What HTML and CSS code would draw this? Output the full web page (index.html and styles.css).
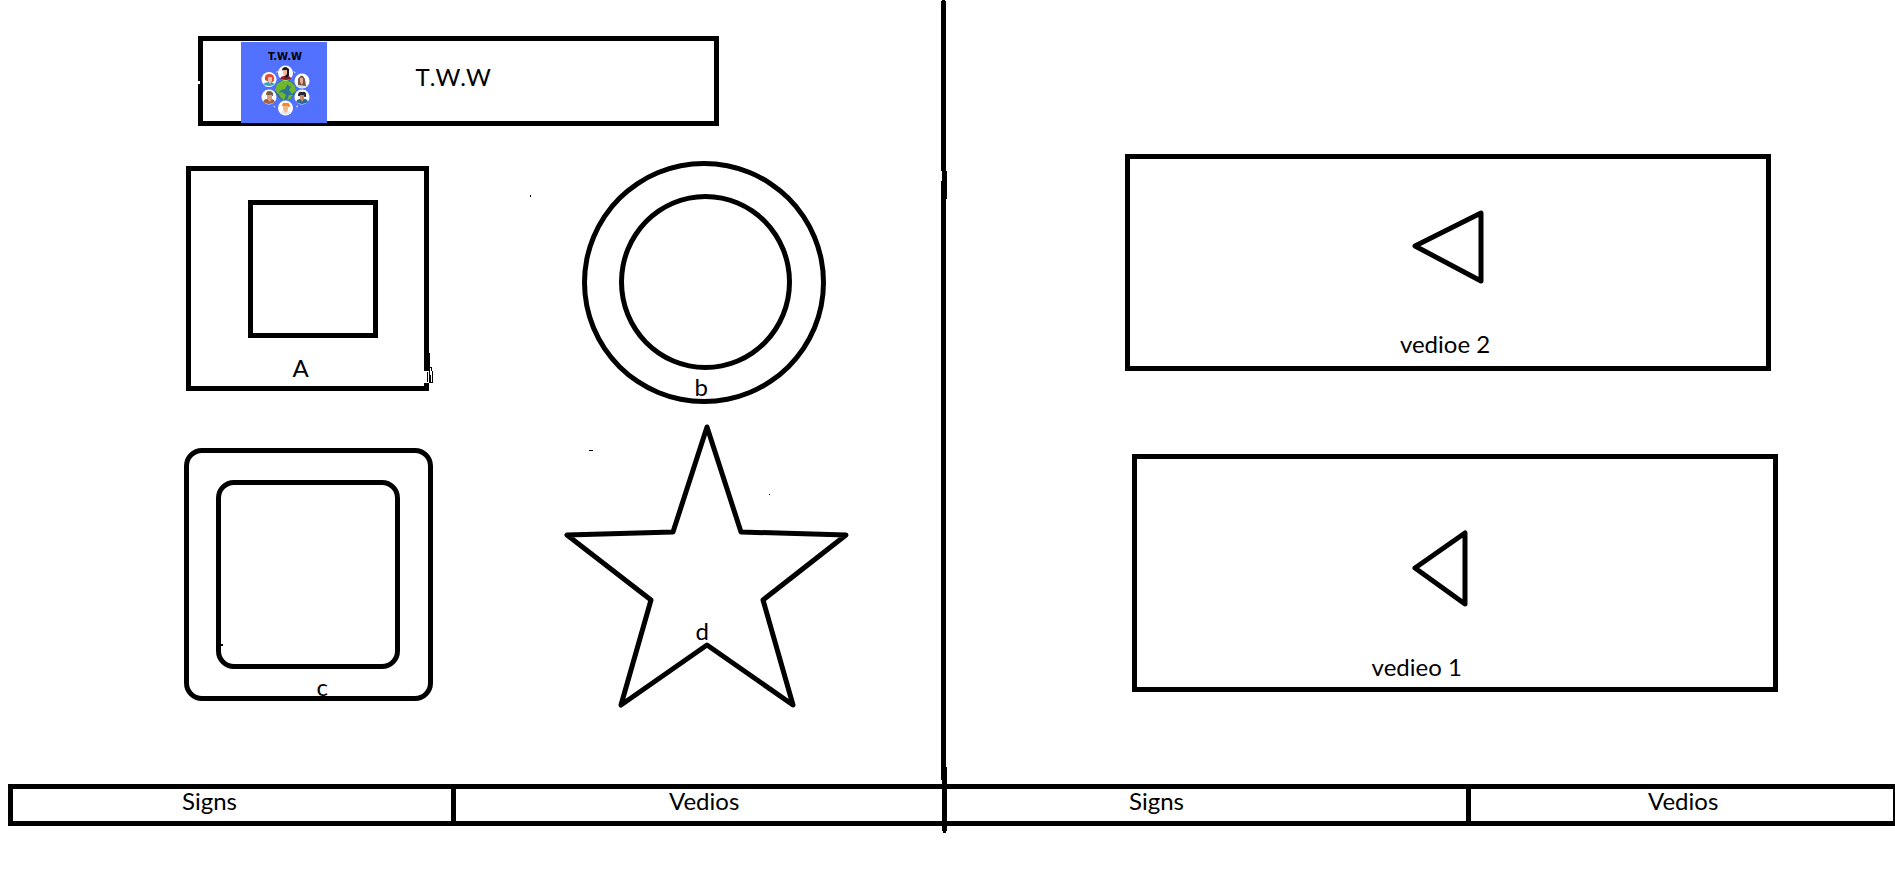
FILE: index.html
```html
<!DOCTYPE html>
<html lang="en">
<head>
<meta charset="utf-8">
<title>T.W.W</title>
<link rel="stylesheet" href="styles.css">
</head>
<body>
<div class="board">
  <div class="panes">
    <section class="pane pane-signs">
      <header class="banner">
        <svg class="logo" viewBox="0 0 86 81" role="img" aria-label="T.W.W logo">
          <rect width="86" height="81" fill="#5271ff"/>
          <text class="logo-text" x="44" y="18" text-anchor="middle">T.W.W</text>
          <circle cx="44.500" cy="48" r="20" fill="none" stroke="#fff" stroke-dasharray="2 4"/>
          <circle cx="44.500" cy="48" r="10.500" fill="#2f7396"/>
          <path d="M36 42l6-4h5l2 3-3 2-2 4-4 1-3 4-3-4zM49 39l5 5 1 5-4 3-3-4 2-3-3-2zM37 51l4-1 4 3-2 5-3-2zM48 53l4 0-3 4-3 1z" fill="#6db92d"/>
          <g fill="#fff"><circle cx="44.500" cy="31" r="7.500"/><circle cx="61" cy="39" r="7.500"/><circle cx="61" cy="55" r="7.500"/><circle cx="44.500" cy="66" r="7.500"/><circle cx="28" cy="55" r="7.500"/><circle cx="28" cy="37.500" r="7.500"/></g>
          <path d="M39 37q1-3 4-3h3q4 0 4 3-5 2-11 0z" fill="#8b1d2c"/><path d="M41 27q3-4 7 0v7l-3 2z" fill="#191622"/><path d="M42 28h4v4l-2 2-2-2z" fill="#efb99c"/>
          <path d="M55 44q6-4 12 0-6 4-12 0z" fill="#cfe3ee"/><path d="M57 43v-6q4-7 7 0l1 7z" fill="#795548"/><path d="M59 36h3v4l-1 3-2-3z" fill="#e8ae94"/>
          <path d="M55 60q2-4 6-3 5-1 6 3-6 4-12 0z" fill="#256b94"/><path d="M57 54q0-5 4-4 5-1 4 5z" fill="#262733"/><path d="M59 53h4v4l-2 3-2-3z" fill="#c98b68"/>
          <path d="M39 71q2-3 5-2 5-1 6 2-5 4-11 0z" fill="#e6edf2"/><path d="M41 64q0-4 4-3 4-1 4 4z" fill="#f18a2c"/><path d="M42 64h5v4l-2 3-3-3z" fill="#f0b78e"/>
          <path d="M22 60q2-4 6-3 4-1 6 3-6 4-12 0z" fill="#a35f48"/><path d="M25 53q0-4 3-4 5 0 4 5z" fill="#786044"/><path d="M26 53h5v4l-2 3-3-3z" fill="#d9a07e"/>
          <path d="M22 42q6-4 12 0-6 4-12 0z" fill="#35a2bd"/><path d="M24 38q-1-7 5-6 5 0 4 7l-3 2z" fill="#e24a34"/><path d="M27 35h4v4l-2 3-2-3z" fill="#f1bfa6"/>
        </svg>
        <h1 class="banner-title">T.W.W</h1>
        <span class="nick"></span>
      </header>

      <div class="shapes">
        <figure class="shape square">
          <div class="inner"></div>
          <figcaption>A</figcaption>
          <svg class="scribble" viewBox="0 0 12 30" shape-rendering="crispEdges" aria-hidden="true">
            <rect x="3" y="0" width="3" height="18"/>
            <rect x="0" y="18" width="5" height="12" fill="#fff"/>
            <path d="M3.500 19v10M5.500 17v12M6.500 22v7M8.500 18v11M7.500 14v4M6 14.500h2M5 29.500h4" fill="none" stroke="#000"/>
          </svg>
        </figure>
        <figure class="shape circle">
          <div class="inner"></div>
          <figcaption>b</figcaption>
        </figure>
        <figure class="shape rounded">
          <div class="inner"></div>
          <figcaption>c</figcaption>
          <span class="tick"></span>
        </figure>
        <figure class="star">
          <svg class="star-outline" viewBox="0 0 286 284" aria-hidden="true">
            <path d="M143 3L177 108 282 111 199 176 229 281 143 221 57 281 87 176 3 111 109 108Z"/>
          </svg>
          <figcaption>d</figcaption>
        </figure>
      </div>

      <svg class="specks" aria-hidden="true">
        <rect x="56.300%" y="195" width="1" height="2"/>
        <rect x="62.600%" y="450" width="4" height="1"/>
        <rect x="81.700%" y="494" width="1" height="1"/>
      </svg>
    </section>

    <section class="pane pane-videos">
      <article class="video video-two">
        <button class="play" type="button" aria-label="Play vedioe 2">
          <svg width="72" height="76" viewBox="0 0 72 76"><path d="M3 37L69 4V72Z"/></svg>
        </button>
        <p class="caption">vedioe 2</p>
      </article>
      <article class="video video-one">
        <button class="play" type="button" aria-label="Play vedieo 1">
          <svg width="56" height="79" viewBox="0 0 56 79"><path d="M3 39L53 4V75Z"/></svg>
        </button>
        <p class="caption">vedieo 1</p>
      </article>
    </section>
  </div>

  <nav class="tabs">
    <a class="tab tab-a" href="#signs">Signs</a>
    <a class="tab tab-b" href="#vedios">Vedios</a>
    <a class="tab tab-c" href="#signs">Signs</a>
    <a class="tab tab-d" href="#vedios">Vedios</a>
  </nav>

  <svg class="divider" aria-hidden="true" width="6" height="833" viewBox="0 0 6 833" shape-rendering="crispEdges">
    <rect x="1" y="0" width="3" height="1"/>
    <rect x="0" y="1" width="5" height="170"/>
    <rect x="1" y="171" width="5" height="28"/>
    <rect x="0" y="181" width="5" height="599"/>
    <rect x="1" y="767" width="5" height="64"/>
    <rect x="2" y="831" width="3" height="2"/>
  </svg>
</div>
</body>
</html>
```

FILE: styles.css
```css
* {
  box-sizing: border-box;
}

body {
  margin: 0;
  background: #fff;
  color: #000;
  font-family: Lato, "Open Sans", sans-serif;
  font-size: 24px;
  line-height: 24px;
}

h1,
p,
figure {
  margin: 0;
}

.board {
  position: relative;
  min-height: 100vh;
}

.panes {
  display: grid;
  grid-template-columns: 941fr 954fr;
}

.pane-signs {
  position: relative;
  padding-top: 36px;
}

/* Title banner */
.banner {
  position: relative;
  display: flex;
  align-items: flex-start;
  gap: 89px;
  height: 90px;
  margin-left: 21%;
  width: 55.4%;
  padding: 1px 0 0 38px;
  border: 5px solid #000;
}

.logo {
  flex: none;
  width: 86px;
  height: 81px;
}

.logo-text {
  font: 700 10px "DejaVu Sans", sans-serif;
}

.banner-title {
  margin-top: 23px;
  font-size: 24px;
  font-weight: 400;
  font-kerning: none;
}

.nick {
  position: absolute;
  left: -5px;
  top: 40px;
  width: 2px;
  height: 3px;
  background: #fff;
}

/* Shape gallery */
.shapes {
  display: grid;
  grid-template-columns: 249px 286px;
  column-gap: 17.200%;
  row-gap: 20px;
  margin: 35px 0 0 19.600%;
}

.shape {
  position: relative;
  border: 5px solid #000;
}

.inner {
  border: 5px solid #000;
}

.square {
  width: 243px;
  height: 225px;
  margin: 5px 0 0 2px;
  padding: 29px 0 0 57px;
}

.square .inner {
  width: 130px;
  height: 138px;
}

.square figcaption {
  margin: 18px 0 0 44px;
}

.scribble {
  position: absolute;
  right: -12px;
  bottom: 3px;
  width: 12px;
  height: 30px;
}

.circle {
  width: 244px;
  height: 243px;
  margin-left: 18px;
  padding: 28px 0 0 32px;
  border-radius: 50%;
}

.circle .inner {
  width: 173px;
  height: 176px;
  border-radius: 50%;
}

.circle figcaption {
  margin: 5px 0 0 76px;
}

.rounded {
  width: 249px;
  height: 253px;
  margin-top: 24px;
  padding: 27px 0 0 27px;
  border-radius: 18px;
}

.rounded .inner {
  width: 184px;
  height: 189px;
  border-radius: 18px;
}

.rounded figcaption {
  margin: 6px 0 0 100px;
}

.tick {
  position: absolute;
  left: 32px;
  top: 191px;
  width: 2px;
  height: 2px;
  background: #000;
}

.star {
  display: grid;
}

.star-outline,
.star figcaption {
  grid-area: 1 / 1;
}

.star-outline {
  width: 286px;
  height: 284px;
}

.star-outline path,
.play path {
  fill: none;
  stroke: #000;
  stroke-width: 5px;
  stroke-linejoin: round;
}

.star figcaption {
  padding: 195px 0 0 132px;
}

.specks {
  position: absolute;
  inset: 0;
  width: 100%;
  height: 100%;
  pointer-events: none;
  shape-rendering: crispEdges;
}

/* Videos */
.pane-videos {
  padding-top: 154px;
}

.video {
  display: flex;
  flex-direction: column;
  align-items: center;
  gap: 47px;
  width: 67.700%;
  border: 5px solid #000;
}

.video-two {
  margin-left: 19.300%;
  padding: 50px 0 10px;
}

.video-one {
  margin: 83px 0 0 20%;
  padding: 70px 30px 8px 0;
}

.play {
  display: block;
  padding: 0;
  border: 0;
  background: none;
  cursor: pointer;
}

.play svg {
  display: block;
}

.video-two .caption {
  padding-right: 6px;
}

.video-one .caption {
  padding-right: 46px;
}

/* Bottom tabs */
.tabs {
  display: grid;
  grid-template-columns: 443fr 491fr 524fr 422fr;
  margin: 76px 0 0 8px;
  border: 5px solid #000;
  border-right-width: 2px;
}

.tab {
  padding-bottom: 8px;
  border-right: 5px solid #000;
  color: inherit;
  text-decoration: none;
}

.tab-a {
  padding-left: 169px;
}

.tab-b {
  padding-left: 213px;
}

.tab-c {
  padding-left: 182px;
}

.tab-d {
  padding-left: 177px;
  border-right: 0;
}

.divider {
  position: absolute;
  top: 0;
  left: calc(50% - 7px);
}
```
